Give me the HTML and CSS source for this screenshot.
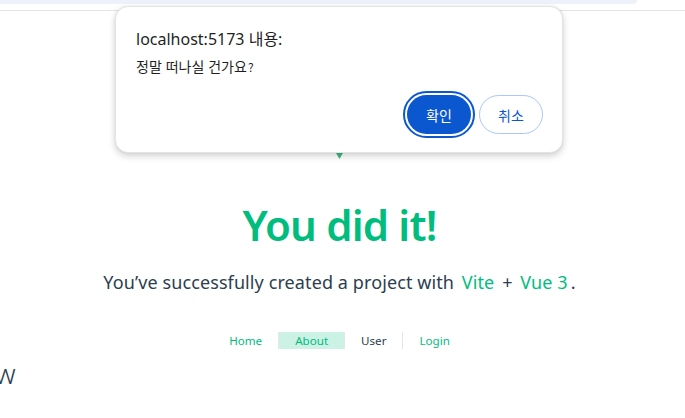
FILE: index.html
```html
<!DOCTYPE html>
<html lang="ko">
<head>
<meta charset="utf-8">
<title>Vue App</title>
<link rel="stylesheet" href="styles.css">
</head>
<body>
<div class="chrome">
  <div class="chrome-band"></div>
  <div class="chrome-line"></div>
</div>
<main class="page">
  <svg class="logo" viewBox="0 0 261.76 226.69" width="125" height="108" aria-label="Vue logo">
    <path d="M161.096.001l-30.225 52.351L100.647.001H-.005l130.877 226.688L261.749.001z" fill="#41b883"/>
    <path d="M161.096.001l-30.225 52.351L100.647.001H52.346l78.526 136.01L209.398.001z" fill="#34495e"/>
  </svg>
  <div class="greetings">
    <h1 class="green">You did it!</h1>
    <h3 class="sub">You’ve successfully created a project with <a class="green-link">Vite</a> + <a class="green-link">Vue 3</a>.</h3>
  </div>
  <nav class="nav">
    <a class="nav-link">Home</a>
    <a class="nav-link active">About</a>
    <a class="nav-link plain">User</a>
    <a class="nav-link">Login</a>
  </nav>
  <div class="cut">w</div>
</main>

<div class="dialog" role="dialog">
  <div class="dialog-title">localhost:5173 내용:</div>
  <div class="dialog-msg">정말 떠나실 건가요<span class="q">?</span></div>
  <div class="dialog-actions">
    <button class="btn btn-primary">확인</button>
    <button class="btn btn-secondary">취소</button>
  </div>
</div>
</body>
</html>
```
FILE: styles.css
```css
* { box-sizing: border-box; }
html, body { margin: 0; padding: 0; }
body {
  width: 685px;
  height: 418px;
  overflow: hidden;
  background: #ffffff;
  font-family: "Noto Sans", "Open Sans", "Noto Sans CJK KR", sans-serif;
  color: #2c3e50;
  position: relative;
}
.chrome-band {
  width: 637px;
  height: 4px;
  background: #edf2fa;
  border-bottom-right-radius: 6px;
}
.chrome-line {
  margin-top: 6px;
  height: 1px;
  background: #e3e3e3;
}
.page {
  display: flex;
  flex-direction: column;
  align-items: center;
  padding-right: 6px;
}
.logo {
  display: block;
  margin-top: 40px;
}
.greetings {
  text-align: center;
}
.green { color: #00bd7e; }
h1.green {
  margin: 41px 0 0;
  font-size: 42px;
  font-weight: 600;
  line-height: 1.2;
  letter-spacing: -0.8px;
}
.sub {
  margin: 20px 0 0;
  font-size: 18px;
  font-weight: 400;
  line-height: 1.4;
  letter-spacing: 0.1px;
  color: #2c3e50;
}
.green-link {
  color: #00bd7e;
  padding: 0 3px;
}
.nav {
  display: flex;
  margin-top: 36px;
  font-size: 11.6px;
  line-height: 17px;
}
.nav-link {
  padding: 0 16px;
  border-left: 1px solid #e6e6e6;
  color: #00bd7e;
}
.nav-link:first-child { border-left: 0; }
.nav-link.active { background: #ccf2e5; }
.nav-link.plain { color: #2c3e50; }
.cut {
  align-self: flex-start;
  margin-top: 9px;
  margin-left: -5px;
  font-size: 28px;
  line-height: 30px;
  font-weight: 300;
}

.dialog {
  position: absolute;
  left: 115px;
  top: 6px;
  width: 448px;
  height: 147px;
  background: #ffffff;
  border: 1px solid #e4e4e4;
  border-radius: 13px;
  box-shadow: 0 3px 7px rgba(0,0,0,0.18), 0 0 2px rgba(0,0,0,0.08);
  padding: 20px 20px 0 20px;
  font-family: "Noto Sans", "Noto Sans CJK KR", sans-serif;
  color: #1f1f1f;
}
.dialog-title {
  font-size: 16px;
  line-height: 24px;
}
.dialog-msg {
  margin-top: 6px;
  font-family: "Noto Sans CJK KR", sans-serif;
  font-size: 14px;
  line-height: 18px;
}
.dialog-msg .q { font-size: 12px; margin-left: 1px; }
.dialog-actions {
  display: flex;
  justify-content: flex-end;
  gap: 8px;
  margin-top: 19px;
  margin-right: -1px;
}
.btn {
  width: 64px;
  height: 39px;
  border-radius: 20px;
  font-family: "Noto Sans CJK KR", sans-serif;
  font-size: 14px;
  padding: 0;
}
.btn-primary {
  background: #0b57d0;
  color: #ffffff;
  border: 0;
  outline: 2px solid #0b57d0;
  outline-offset: 2px;
}
.btn-secondary {
  background: #ffffff;
  color: #0b57d0;
  border: 1px solid #a8c7fa;
}
```
